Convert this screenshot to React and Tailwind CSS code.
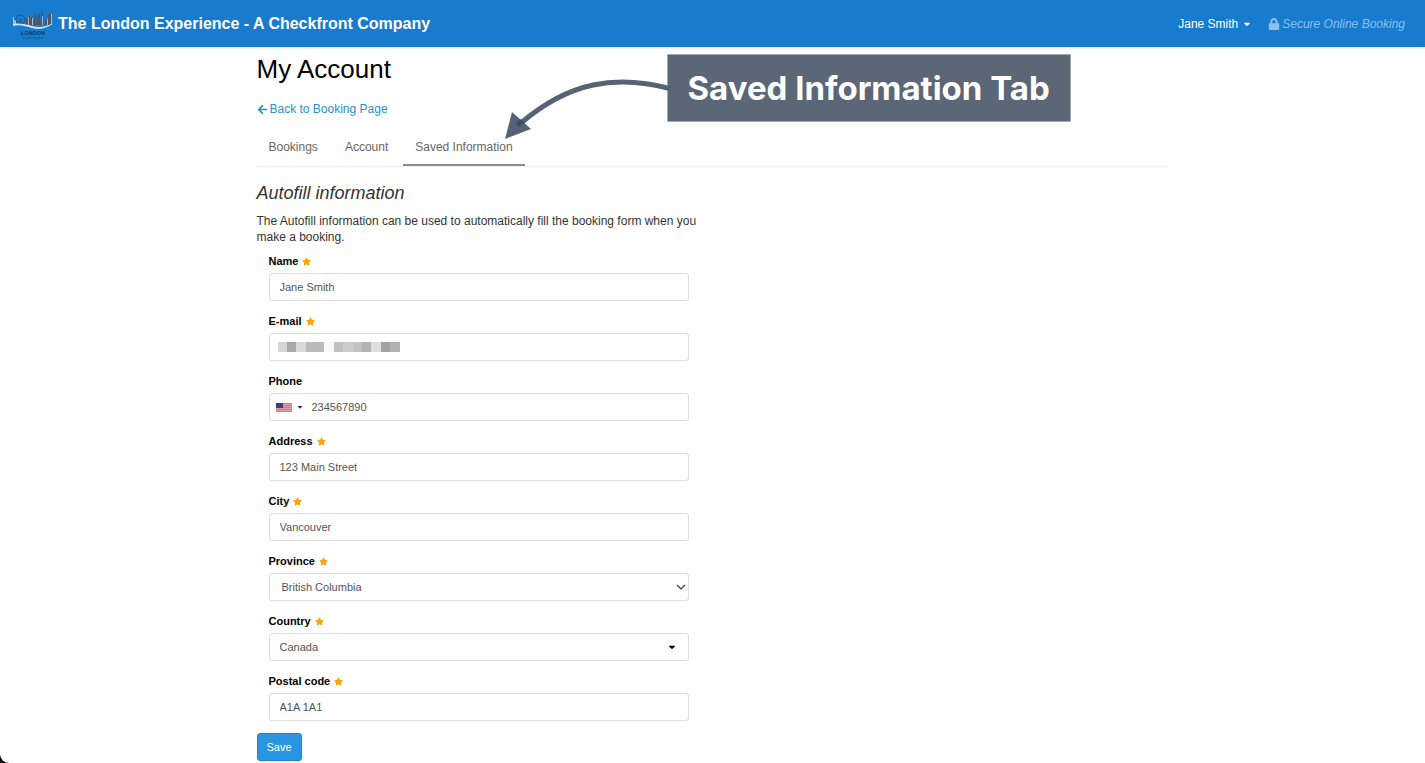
import React, { useState } from 'react';
import { FaArrowLeft, FaCaretDown, FaLock, FaStar } from 'react-icons/fa';

const TABS = ['Bookings', 'Account', 'Saved Information'];

const MASK = [
  'bg-[#d6d6d6]', 'bg-[#a8a8a8]', 'bg-[#d9d9d9]', 'bg-[#bababa]', 'bg-[#b9b9b9]', 'bg-[#f8f8f8]',
  'bg-[#c0c0c0]', 'bg-[#cdcdcd]', 'bg-[#c2c2c2]', 'bg-[#b2b2b2]', 'bg-[#dedede]', 'bg-[#a2a2a2]', 'bg-[#b1b1b1]',
];

const control = 'block w-full h-7 px-[10px] rounded-[3px] border border-[#dcdcdc] bg-white text-[11px] text-[#555] outline-none focus:border-[#2a95e0]';

function Logo() {
  return (
    <svg viewBox="0 0 42 32" className="w-[42px] h-8" aria-hidden="true">
      <g fill="#4a5765">
        <path d="M14 17V10h2V8h2v9zM18 17V9h3v8zM21 17l1-8 1-7 1 7 1 8zM25 17V7h1l1-2 1 2v10zM28 17l1-9 1-7 1 7 1 9zM33 17v-6h3v6zM36 17V6h4v11z" />
      </g>
      <path d="M1 9h1v3h2v5H1zM16 9h1v8h-1zM20 10h1v7h-1zM35 11h1v6h-1zM39 6h1v11h-1zM30 8h1v9h-1z" fill="#a9bac9" />
      <circle cx="8.500" cy="11.500" r="4.500" fill="none" stroke="#2a4d70" strokeWidth="0.8" />
      <path d="m6 17 2.500-5.500L11 17" fill="none" stroke="#2a4d70" strokeWidth="0.7" />
      <path d="M1 16c7-1 12 0 19 2s14 1 21-3c-6 6-14 7-21 5S8 16 1 18z" fill="#cfe5f7" />
      <text x="21" y="27" textAnchor="middle" fontSize="5.500" fill="#153a61" fontFamily="Liberation Sans, sans-serif">LONDON</text>
      <text x="21" y="31" textAnchor="middle" fontSize="4" fill="#175a99" fontFamily="Liberation Sans, sans-serif">experience</text>
    </svg>
  );
}

function Flag() {
  return (
    <svg viewBox="0 0 16 9" className="w-4 h-[9px]" aria-hidden="true">
      <rect width="16" height="9" fill="#e09aa4" />
      <path d="M0 .5h16M0 2.5h16M0 4.5h16M0 6.5h16M0 8.5h16" stroke="#d47c89" strokeWidth="1" />
      <rect width="7" height="5" fill="#3f3f78" />
    </svg>
  );
}

function Field({ id, label, required, children }) {
  return (
    <div className="mb-3">
      <label htmlFor={id} className="flex items-center gap-1 h-4 mb-1 text-[11px] font-bold text-black">
        {label}
        {required && <FaStar size={9} className="text-[#fca510]" />}
      </label>
      {children}
    </div>
  );
}

function Callout() {
  return (
    <div className="absolute top-[7px] left-[246px] flex pointer-events-none">
      <svg viewBox="0 0 170 86" className="relative z-10 w-[170px] h-[86px] -mr-[6px]" aria-hidden="true">
        <path d="M169 35C112 20 66 28 18 69" fill="none" stroke="#566377" strokeWidth="5" />
        <path d="M9 58 2 85 28 75z" fill="#566377" />
        <path d="m13 69 5-4 3 4-5 4z" fill="#3f4d61" />
      </svg>
      <div className="h-[68px] px-5 flex items-center bg-[#5b6677] border border-[#a3aab4] text-white text-[33px] font-bold font-['Inter',sans-serif] whitespace-nowrap">
        Saved Information Tab
      </div>
    </div>
  );
}

export default function App() {
  const [tab, setTab] = useState('Saved Information');

  return (
    <div className="bg-[#070d12]">
      <div className="min-h-screen bg-white rounded-bl-[9px] font-['Liberation_Sans',Arial,sans-serif] text-xs text-[#333]">
        <header className="h-[47px] pl-3 pr-5 flex items-center justify-between bg-[#187bcd] shadow-sm text-white">
          <a href="#home" className="flex items-center gap-1 text-base font-bold">
            <Logo />
            The London Experience - A Checkfront Company
          </a>
          <div className="flex items-center gap-4">
            <button type="button" className="flex items-center gap-1">
              Jane Smith
              <FaCaretDown size={10} />
            </button>
            <span className="flex items-center gap-[2px] italic text-[#8cc0ec]">
              <FaLock size={12} />
              Secure Online Booking
            </span>
          </div>
        </header>

        <main className="relative max-w-[912px] mx-auto pt-[6px]">
          <h1 className="text-[26px] leading-8 text-black">My Account</h1>
          <a href="#booking" className="mt-4 flex items-center gap-[2px] w-fit leading-4 text-[#2a8fd0]">
            <FaArrowLeft size={11} />
            Back to Booking Page
          </a>

          <nav className="mt-3 flex gap-[3px] border-b border-[#eee]">
            {TABS.map((t) => (
              <button
                key={t}
                type="button"
                onClick={() => setTab(t)}
                className={`h-[37px] px-3 border-b-2 text-[#666] ${t === tab ? 'border-[#8c8c8c]' : 'border-transparent'}`}
              >
                {t}
              </button>
            ))}
          </nav>

          <form className="w-1/2 pr-3" onSubmit={(e) => e.preventDefault()}>
            <h2 className="mt-4 text-lg leading-5 italic">Autofill information</h2>
            <p className="mt-[10px] leading-4">
              The Autofill information can be used to automatically fill the booking form when you make a booking.
            </p>

            <div className="px-3 pt-2">
              <Field id="name" label="Name" required>
                <input id="name" className={control} defaultValue="Jane Smith" />
              </Field>
              <Field id="email" label="E-mail" required>
                <div className="relative">
                  <input id="email" type="email" className={control} />
                  <div className="absolute left-[9px] top-[9px] h-[10px] w-[122px] flex pointer-events-none">
                    {MASK.map((c, i) => <span key={i} className={`flex-1 ${c}`} />)}
                  </div>
                </div>
              </Field>
              <Field id="phone" label="Phone">
                <div className="flex h-7 rounded-[3px] border border-[#dcdcdc]">
                  <button type="button" aria-label="Country code" className="pl-[6px] pr-2 flex items-center gap-1">
                    <Flag />
                    <FaCaretDown size={8} />
                  </button>
                  <input id="phone" type="tel" className="flex-1 text-[11px] text-[#555] outline-none" defaultValue="234567890" />
                </div>
              </Field>
              <Field id="address" label="Address" required>
                <input id="address" className={control} defaultValue="123 Main Street" />
              </Field>
              <Field id="city" label="City" required>
                <input id="city" className={control} defaultValue="Vancouver" />
              </Field>
              <Field id="province" label="Province" required>
                <div className="relative">
                  <select id="province" className={`${control} appearance-none pl-3`}>
                    <option>British Columbia</option>
                  </select>
                  <svg viewBox="0 0 10 6" className="absolute right-[3px] top-[11px] w-[10px] h-[6px] pointer-events-none" aria-hidden="true">
                    <path d="m1 1 4 4 4-4" fill="none" stroke="#333" strokeWidth="1.1" />
                  </svg>
                </div>
              </Field>
              <Field id="country" label="Country" required>
                <div className="relative">
                  <select id="country" className={`${control} appearance-none text-[#333]`}>
                    <option>Canada</option>
                  </select>
                  <FaCaretDown size={10} className="absolute right-3 top-[9px] text-black pointer-events-none" />
                </div>
              </Field>
              <Field id="postal" label="Postal code" required>
                <input id="postal" className={control} defaultValue="A1A 1A1" />
              </Field>
            </div>

            <button type="submit" className="h-7 px-[9px] rounded-[3px] border border-[#1c86d1] bg-[#2a95e0] text-white text-[11px]">
              Save
            </button>
          </form>

          <Callout />
        </main>
      </div>
    </div>
  );
}
